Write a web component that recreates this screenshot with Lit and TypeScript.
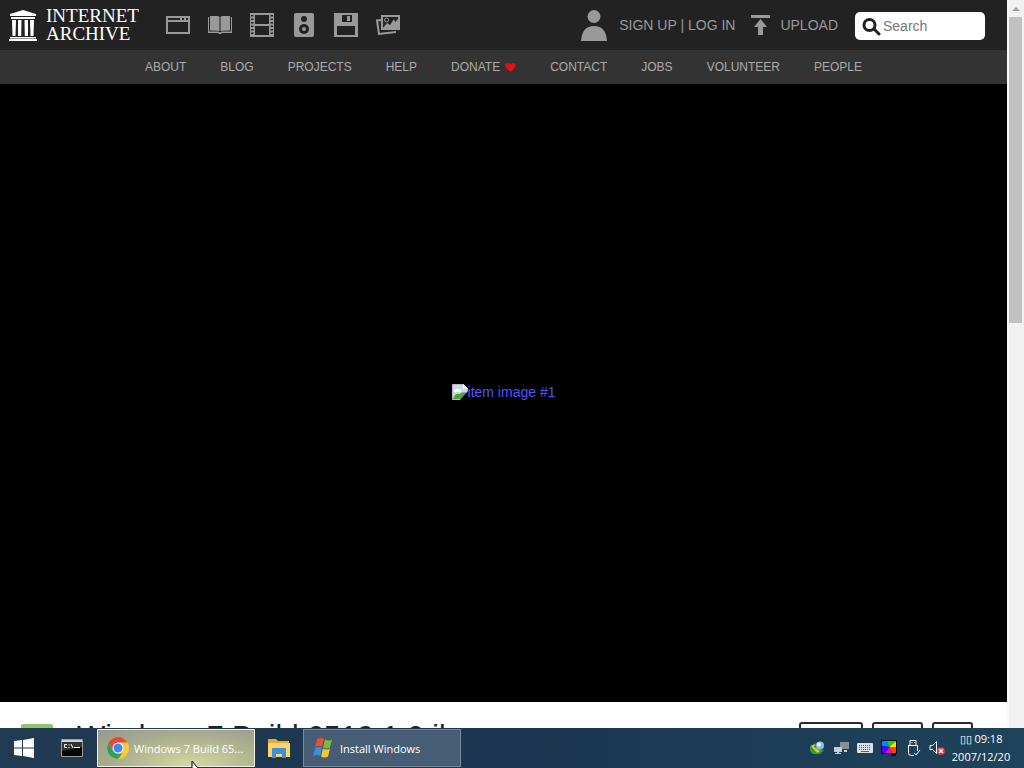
import { LitElement, html, css, svg } from "lit";
import { customElement } from "lit/decorators.js";

const temple = svg`<path fill="#fff" d="M14 0 27 4v2H1V4zM2 7h24v2H2zM3 10h4l-.5 16h-3zM9 10h3.500l-.3 16H9zM15.500 10H19v16h-3.200zM21 10h4l-.5 16h-3zM1 27h26v1.500H1zM0 29h28v2H0z"/>`;

const media = [
  { name: "Web", art: svg`<path fill="#999" fill-rule="evenodd" d="M0 3h24v18H0zm2 2v2h12V5zm14 0v2h2V5zm4 0v2h2V5zM2 9v10h20V9z"/>` },
  { name: "Texts", art: svg`<path fill="#999" d="M2 3h7q2 0 2.500 1v14Q10 17.500 2 17.500zM22 3h-7q-2 0-2.500 1v14q1.500-.5 9.500-.5zM0 4h1v14.500h9.500l1 .8h1l1-.8H23V4h1v16H14l-1 1h-2l-1-1H0z"/>` },
  { name: "Video", art: svg`<path fill="#999" fill-rule="evenodd" d="M0 0h24v24H0zm5 2v9h14V2zm0 11v9h14v-9zM1 2v1.500h2.500V2zm0 3.500V7h2.500V5.500zM1 9v1.500h2.500V9zm0 3.500V14h2.500v-1.500zM1 16v1.500h2.500V16zm0 3.500V21h2.500v-1.500zM20.500 2v1.500H23V2zm0 3.500V7H23V5.500zm0 3.500v1.500H23V9zm0 3.500V14H23v-1.500zm0 3.500v1.500H23V16zm0 3.500V21H23v-1.500z"/>` },
  { name: "Audio", art: svg`<rect x="2" width="20" height="24" rx="2" fill="#999"/><circle cx="12" cy="6" r="3" fill="#222"/><circle cx="12" cy="16" r="5" fill="#222"/><circle cx="12" cy="16" r="2" fill="#999"/>` },
  { name: "Software", art: svg`<path fill="#999" fill-rule="evenodd" d="M0 0h24v24H0zm8 2v7h10V2zm5 1h3v5h-3zM3 13v9h18v-9z"/>` },
  { name: "Images", art: svg`<path fill="none" stroke="#999" stroke-width="2" d="M6 3h17v13H6zM5 7 1 7.500l2 13.500 17-2"/><circle cx="10.500" cy="7" r="2" fill="none" stroke="#999"/><path fill="#999" d="m7 15 4-5 3 2 4-6 1 3 3-3v9z"/>` },
];

const links = ["ABOUT", "BLOG", "PROJECTS", "HELP", "DONATE", "CONTACT", "JOBS", "VOLUNTEER", "PEOPLE"];

const flag = svg`<path fill="#e8532b" d="M5 1q4-2 7 0l-2 8q-3-2-7 0z"/><path fill="#7db93b" d="M13 1.500q4 2 7 0l-2 8q-3 2-7 0z"/><path fill="#3c8fd8" d="M3 10q4-2 7 0l-2 8q-3-2-7 0z"/><path fill="#f7c52d" d="M11 10.500q4 2 7 0l-2 8q-3 2-7 0z"/>`;

const tray = [
  { name: "Download manager", art: svg`<path fill="#2f9a3f" d="M1 6 8 3l3 6 4 1-4 4H4l-3-3z"/><path fill="#e9c62c" d="m2 6 4-2-1 3 6 4-3 2z"/><circle cx="11" cy="5.500" r="4" fill="#90bddc"/><circle cx="10" cy="4.500" r="2" fill="#e4f3fb"/>` },
  { name: "Network", art: svg`<path fill="#888f95" d="M7 2h9v7H7z"/><path fill="#c7cdd2" d="M1 7h8v5H6v1h2v1H2v-1h2v-1H1zM11 10h3v2h-3z"/>` },
  { name: "Keyboard", art: svg`<rect y="3" width="16" height="10" rx="1" fill="#d8dfe5"/><path stroke="#53697b" stroke-dasharray="1 1" d="M2 5.500h12M2 7.500h12M2 9.500h12"/><path stroke="#53697b" d="M4 11.500h8"/>` },
  { name: "Display", art: svg`<path fill="#081020" d="M0 0h16v14H0zM10 14h5v2h-5z"/><path fill="#08f" d="M1 1h5l2 6-7-1z"/><path fill="#0d3" d="M6 1h9L8 7z"/><path fill="#fd0" d="m15 1v6H8z"/><path fill="#f40" d="M15 7v6h-4L8 7z"/><path fill="#f0c" d="M11 13H4l4-6z"/><path fill="#50f" d="M4 13H1V6l7 1z"/>` },
  { name: "Safely remove hardware", art: svg`<path fill="none" stroke="#fff" d="M5 5V.5h6V5M3.500 5.500h9V11M3.500 5v8q0 2.500 3 2.500H9M6.500 2.500h1M9 2.500h1M9 13l2 2 4-5"/>` },
  { name: "Volume muted", art: svg`<path fill="none" stroke="#fff" d="M1 5.500h2.500l4-4v12l-4-4H1z"/><circle cx="12" cy="11" r="4" fill="#dc3038"/><path stroke="#fff" stroke-width="1.500" d="m10 9 4 4m0-4-4 4"/>` },
];

@customElement("app-root")
export class AppRoot extends LitElement {
  static styles = css`
    :host { display: flex; flex-direction: column; height: 100vh; overflow: hidden; position: relative; font-family: "Liberation Sans", Arial, sans-serif; }
    * { box-sizing: border-box; }
    svg { display: block; flex: none; }
    a { color: inherit; text-decoration: none; }
    button { font: inherit; color: inherit; background: none; border: 0; padding: 0; }
    .window { flex: 1; min-height: 0; display: flex; background: #fff; }
    .page { flex: 1; min-width: 0; overflow: hidden; }
    .top { height: 50px; background: #222; color: #999; display: flex; align-items: center; padding: 0 22px 0 9px; font-size: 14px; }
    .brand { display: flex; align-items: center; gap: 9px; width: 124px; color: #fff; font: 19px/18px "Liberation Serif", serif; }
    .words { display: flex; flex-direction: column; }
    .media { display: flex; gap: 18px; margin-left: 33px; flex: 1; }
    .account { display: flex; align-items: center; gap: 12px; margin-right: 16px; }
    .upload { display: flex; align-items: center; gap: 10px; margin-right: 17px; }
    .search { display: flex; align-items: center; gap: 2px; width: 130px; height: 28px; margin-top: 2px; padding: 0 7px; background: #fff; border-radius: 5px; }
    .search input { flex: 1; min-width: 0; border: 0; padding: 0; outline: 0; font: 14px "Liberation Sans", Arial, sans-serif; background: none; }
    .search input::placeholder { color: #777; }
    .nav { height: 34px; background: #333; color: #aaa; display: flex; align-items: center; justify-content: center; gap: 34px; font-size: 12px; }
    .nav a { display: flex; align-items: center; gap: 5px; }
    .hero { height: calc(100vh - 150px); padding-bottom: 2px; background: #000; display: flex; align-items: center; justify-content: center; }
    .hero a { display: flex; align-items: center; color: #5551ff; font-size: 14px; }
    .item { display: flex; align-items: flex-start; padding: 20px 34px 0 21px; color: #222; }
    .kind { margin-top: 2px; }
    h1 { flex: 1; margin: 0 0 0 24px; font-size: 30px; line-height: 28px; font-weight: 400; white-space: nowrap; }
    .actions { display: flex; gap: 9px; }
    .actions button { height: 34px; border: 2px solid #2b2b2b; border-radius: 3px; }
    .favorite { width: 64px; }
    .share { width: 51px; }
    .flag { width: 41px; }
    .scroll { width: 17px; background: #f1f1f1; border-left: 2px solid #f8f8f8; padding: 0 2px 0 0; }
    .arrow { height: 17px; display: flex; align-items: center; justify-content: center; }
    .thumb { height: 42%; background: #c1c1c1; }
    .taskbar { height: 40px; background: linear-gradient(90deg, #203b52, #1c3550 50%, #1e435b); color: #fff; display: flex; font: 11px "Open Sans", "Noto Sans", sans-serif; }
    .icon { width: 48px; display: flex; align-items: center; justify-content: center; }
    .task { width: 158px; display: flex; align-items: center; gap: 4px; padding: 0 0 0 8px; margin: 1px 0; border: 1px solid #74899a; background: #465d73; white-space: nowrap; }
    .task.active { margin-left: 1px; border-color: #f2f3e8; background: radial-gradient(ellipse at 60% 100%, #d4daa4, #a9ad8e 60%, #96998d); }
    .tray { flex: 1; display: flex; align-items: center; justify-content: flex-end; gap: 8px; padding-right: 13px; }
    .clock { line-height: 18px; text-align: center; width: 60px; margin-left: -2px; white-space: nowrap; }
    .pointer { position: absolute; left: 191px; bottom: -12px; pointer-events: none; }
  `;

  render() {
    return html`
      <div class="window">
        <main class="page">
          <header class="top">
            <a class="brand" href="#" aria-label="Internet Archive">
              <svg width="28" height="31" viewBox="0 0 28 31">${temple}</svg>
              <span class="words"><span>INTERNET</span><span>ARCHIVE</span></span>
            </a>
            <nav class="media">
              ${media.map((m) => html`<a href="#" aria-label=${m.name}><svg width="24" height="24" viewBox="0 0 24 24">${m.art}</svg></a>`)}
            </nav>
            <a class="account" href="#"><svg width="26" height="31" viewBox="0 0 26 31"><circle cx="13" cy="6.500" r="6.500" fill="#999"/><path fill="#999" d="M0 31q1-15 13-15t13 15z"/></svg><span>SIGN UP | LOG IN</span></a>
            <a class="upload" href="#"><svg width="19" height="20" viewBox="0 0 19 20"><path fill="#999" d="M0 0h19v3H0zM9.500 4 16 12h-4v8H7v-8H3z"/></svg><span>UPLOAD</span></a>
            <label class="search"><svg width="19" height="21" viewBox="0 0 19 21"><circle cx="7.500" cy="9" r="5.500" fill="none" stroke="#222" stroke-width="3"/><path stroke="#222" stroke-width="3" stroke-linecap="round" d="m12 13 5 5"/></svg><input type="text" placeholder="Search" aria-label="Search" /></label>
          </header>
          <nav class="nav">
            ${links.map((l) => html`<a href="#"><span>${l}</span>${l === "DONATE" ? html`<svg width="11" height="10" viewBox="0 0 11 10"><path fill="#f00b12" d="M5.500 10 1 5.500Q-1 1 2.500 1q2 0 3 1.200Q6.500 1 8.500 1 12 1 10 5.500z"/></svg>` : ""}</a>`)}
          </nav>
          <section class="hero">
            <a href="#"><svg width="16" height="16" viewBox="0 0 16 16"><path fill="#c9d9ee" stroke="#bbb" d="M.5.500h11l4 4v11H.5z"/><path fill="#fff" d="M2 7q1-3 4-2 3 0 3 3H2z"/><path fill="#4da43c" d="M1 15q2-6 6-5 4-3 8-1v6z"/><path fill="#fff" d="M11 0v5h5z"/><path d="M8 16l8-9v9z"/></svg><span>item image #1</span></a>
          </section>
          <section class="item">
            <svg class="kind" width="32" height="32" viewBox="0 0 32 32"><rect width="32" height="32" rx="2" fill="#91c369"/></svg>
            <h1>Windows 7 Build 6519.1.0 il</h1>
            <div class="actions">
              <button class="favorite" aria-label="Favorite"></button>
              <button class="share" aria-label="Share"></button>
              <button class="flag" aria-label="Flag"></button>
            </div>
          </section>
        </main>
        <div class="scroll">
          <div class="arrow"><svg width="8" height="4" viewBox="0 0 8 4"><path fill="#a3a3a3" d="m4 0 4 4H0z"/></svg></div>
          <div class="thumb"></div>
        </div>
      </div>
      <footer class="taskbar">
        <button class="icon" aria-label="Start"><svg width="20" height="20" viewBox="0 0 20 20"><path fill="#fff" d="m0 3 8-1v7.500H0zM9 2l11-2v9.500H9zM0 10.500h8V18l-8-1zM9 10.500h11V20L9 18z"/></svg></button>
        <button class="icon" aria-label="Command prompt"><svg width="22" height="18" viewBox="0 0 22 18"><path fill="#050505" stroke="#999" d="M.5.500h21v17H.5z"/><path fill="#cfd3d6" d="M1 1h20v2H1z"/><path fill="#333" d="M1 3h20v5L1 12z"/><path fill="none" stroke="#fff" d="M6 5.500H3.500v3H6M8 5.500v1M8 8v1M10 5l2 4M13 8.500h6"/></svg></button>
        <button class="task active"><svg width="24" height="24" viewBox="0 0 24 24"><circle cx="12" cy="12" r="11" fill="#f8cb3c"/><path fill="#e04a3f" d="M2.500 6.500A11 11 0 0 1 21.500 6.500H12L7.300 14.700z"/><path fill="#33a05a" d="M2.500 6.500 7.300 14.700 12 17.500h4.500L12 23A11 11 0 0 1 2.500 6.500z"/><circle cx="12" cy="12" r="5.500" fill="#fff"/><circle cx="12" cy="12" r="4.500" fill="#4286ee"/></svg><span>Windows 7 Build 65...</span></button>
        <button class="icon" aria-label="File Explorer"><svg width="22" height="20" viewBox="0 0 22 20"><path fill="#e7a92f" d="M0 1h8l2 2h11v5H0z"/><path fill="#fbd567" d="M0 5h22v14H0z"/><path fill="#3f8fda" d="M4 11q0-1 1-1h12q1 0 1 1v9h-4v-4H8v4H4z"/></svg></button>
        <button class="task"><svg width="24" height="20" viewBox="0 0 24 20">${flag}</svg><span>Install Windows</span></button>
        <div class="tray">
          ${tray.map((t) => html`<svg role="img" aria-label=${t.name} width="16" height="16" viewBox="0 0 16 16">${t.art}</svg>`)}
          <div class="clock"><div>▯▯ 09:18</div><div>2007/12/20</div></div>
        </div>
      </footer>
      <svg class="pointer" width="13" height="20" viewBox="0 0 13 20"><path fill="#fff" stroke="#000" d="M1 1v15l3.500-3 2.500 6 2-1-2.500-5H11z"/></svg>
    `;
  }
}
